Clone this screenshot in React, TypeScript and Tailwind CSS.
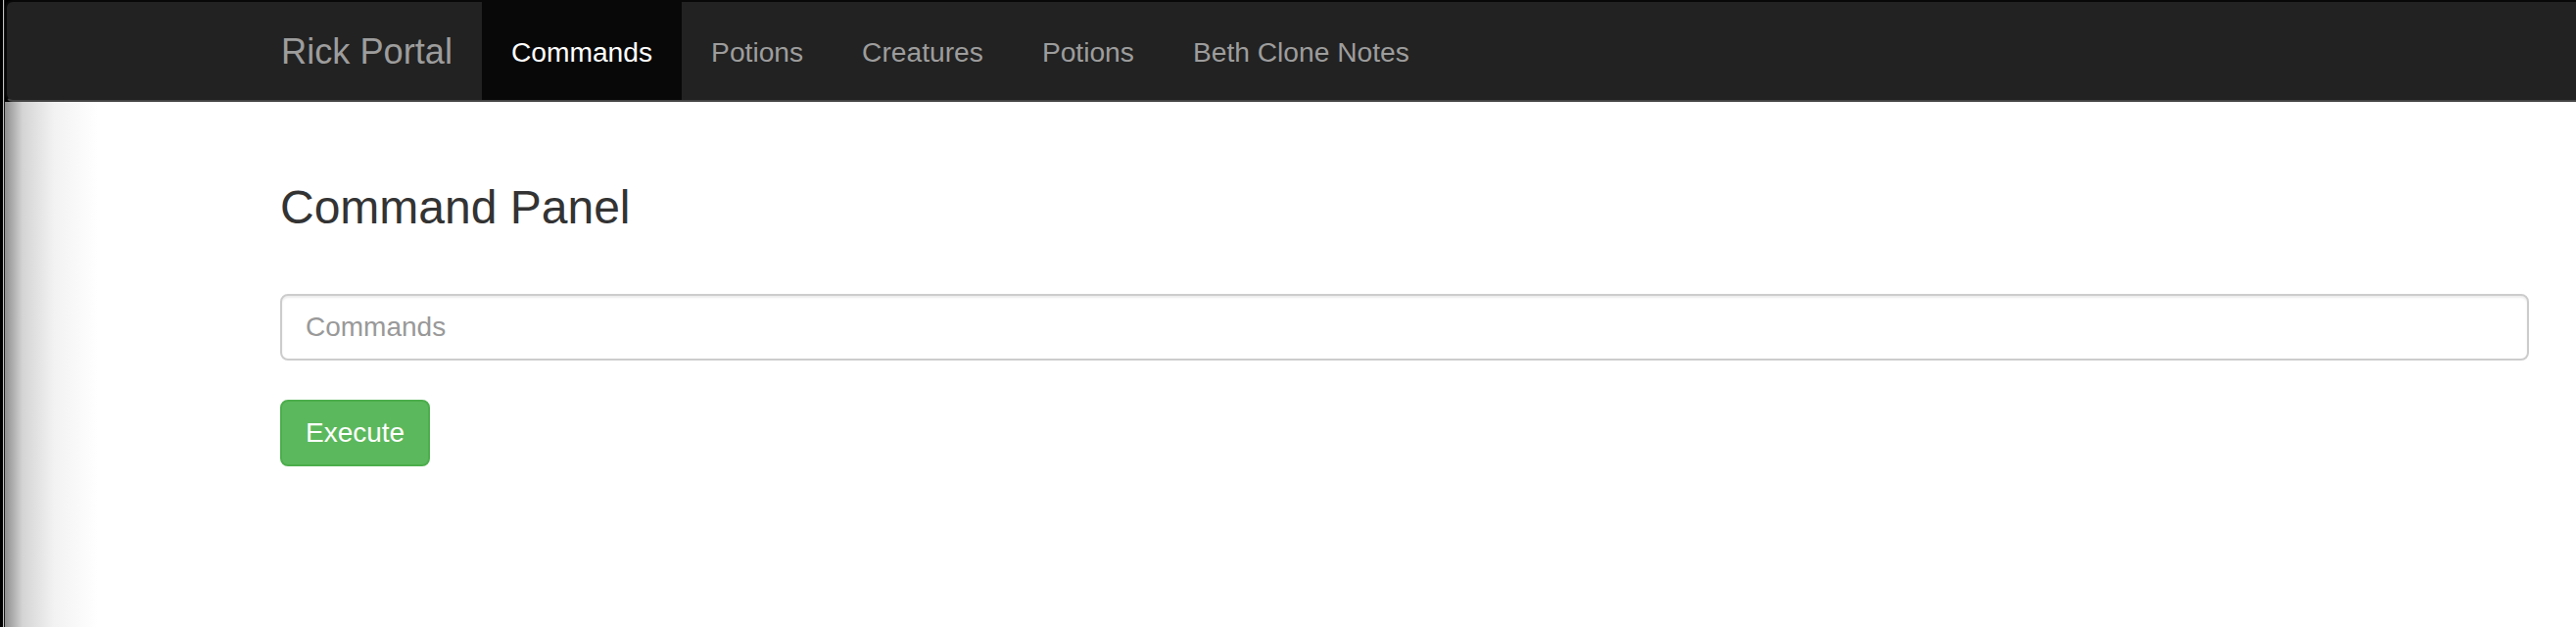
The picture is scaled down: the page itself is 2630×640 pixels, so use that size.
import { useState } from "react";

const links = ["Commands", "Potions", "Creatures", "Potions", "Beth Clone Notes"];

export default function App() {
  const [active, setActive] = useState(0);
  const [command, setCommand] = useState("");

  return (
    <div className="flex h-[640px] overflow-hidden bg-white font-['Liberation_Sans',Arial,sans-serif]">
      {/* window frame on the left */}
      <div className="w-[3px] shrink-0 bg-black" />
      <div className="w-px shrink-0 bg-[#c4c4c4]" />
      <div className="w-px shrink-0 bg-[#1a1a1a]" />

      <div className="min-w-0 flex-1 bg-[linear-gradient(to_right,#8e8e8e_0px,#d4d4d4_18px,#f2f2f2_50px,#ffffff_95px)]">
        <div className="-mr-4 bg-black">
          <nav className="flex h-[104px] rounded-[8px] border-2 border-[#080808] border-b-[#444] bg-[#222]">
            <div className="ml-[280px] flex">
              <a
                href="#"
                className="pt-[31px] pb-[29px] pr-[30px] text-[36.2px] leading-[40px] text-[#9d9d9d] hover:text-white"
              >
                Rick Portal
              </a>
              <ul className="flex">
                {links.map((label, i) => (
                  <li key={i}>
                    <a
                      href="#"
                      onClick={(e) => {
                        e.preventDefault();
                        setActive(i);
                      }}
                      className={
                        i === active
                          ? "block bg-[#080808] px-[30px] pt-[31px] pb-[29px] text-[28.2px] leading-[40px] text-white"
                          : "block px-[30px] pt-[31px] pb-[29px] text-[28.2px] leading-[40px] text-[#9d9d9d] hover:text-white"
                      }
                    >
                      {label}
                    </a>
                  </li>
                ))}
              </ul>
            </div>
          </nav>
        </div>

        <div className="ml-[281px] w-[2296px]">
          <h3 className="mt-[82px] text-[48px] leading-[52.8px] font-normal text-[#333]">
            Command Panel
          </h3>
          <input
            type="text"
            value={command}
            onChange={(e) => setCommand(e.target.value)}
            placeholder="Commands"
            className="mt-[61px] block h-[68px] w-full rounded-[8px] border-2 border-[#ccc] px-[24px] py-[12px] text-[28px] leading-[40px] text-[#555] shadow-[inset_0_2px_2px_rgba(0,0,0,0.075)] outline-none placeholder:text-[#999]"
          />
          <button
            type="button"
            className="mt-[40px] h-[68px] rounded-[8px] border-2 border-[#4cae4c] bg-[#5cb85c] px-[24px] text-[28px] leading-[40px] text-white hover:bg-[#449d44]"
          >
            Execute
          </button>
        </div>
      </div>
    </div>
  );
}
